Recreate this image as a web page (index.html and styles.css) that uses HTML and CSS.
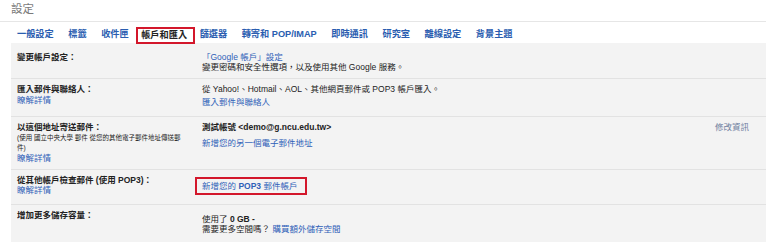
FILE: index.html
```html
<!DOCTYPE html>
<html lang="zh-Hant">
<head>
<meta charset="utf-8">
<title>設定</title>
<link rel="stylesheet" href="styles.css">
</head>
<body>
<div class="title">設定</div>
<nav class="tabs">
  <a class="tab">一般設定</a>
  <a class="tab">標籤</a>
  <a class="tab">收件匣</a>
  <span class="tab active">帳戶和匯入</span>
  <a class="tab">篩選器</a>
  <a class="tab">轉寄和 POP/IMAP</a>
  <a class="tab">即時通訊</a>
  <a class="tab">研究室</a>
  <a class="tab">離線設定</a>
  <a class="tab">背景主題</a>
</nav>
<div class="panel">
  <div class="row r1">
    <div class="label"><div class="lt">變更帳戶設定：</div></div>
    <div class="value">
      <div><a class="lnk">「Google 帳戶」設定</a></div>
      <div>變更密碼和安全性選項，以及使用其他 Google 服務。</div>
    </div>
    <div class="action"></div>
  </div>
  <div class="row r2">
    <div class="label">
      <div class="lt">匯入郵件與聯絡人：</div>
      <div class="learn"><a class="lnk">瞭解詳情</a></div>
    </div>
    <div class="value">
      <div>從 Yahoo!、Hotmail、AOL、其他網頁郵件或 POP3 帳戶匯入。</div>
      <div class="import"><a class="lnk">匯入郵件與聯絡人</a></div>
    </div>
    <div class="action"></div>
  </div>
  <div class="row r3">
    <div class="label">
      <div class="lt">以這個地址寄送郵件：</div>
      <div class="note">(使用 國立中央大學 郵件 從您的其他電子郵件地址傳送郵件)</div>
      <div><a class="lnk">瞭解詳情</a></div>
    </div>
    <div class="value">
      <div class="b">測試帳號 &lt;demo@g.ncu.edu.tw&gt;</div>
      <div class="addr"><a class="lnk">新增您的另一個電子郵件地址</a></div>
    </div>
    <div class="action"><a class="edit">修改資訊</a></div>
  </div>
  <div class="row r4">
    <div class="label">
      <div class="lt">從其他帳戶檢查郵件 (使用 POP3)：</div>
      <div><a class="lnk">瞭解詳情</a></div>
    </div>
    <div class="value">
      <a class="lnk boxed">新增您的 <b>POP3</b> 郵件帳戶</a>
    </div>
    <div class="action"></div>
  </div>
  <div class="row r5">
    <div class="label"><div class="lt">增加更多儲存容量：</div></div>
    <div class="value storage">
      <div>使用了 <b>0 GB -</b></div>
      <div>需要更多空間嗎？ <a class="lnk">購買額外儲存空間</a></div>
    </div>
    <div class="action"></div>
  </div>
</div>
</body>
</html>
```
FILE: styles.css
```css
html, body {
  margin: 0;
  padding: 0;
  background: #ffffff;
}
body {
  font-family: "Liberation Sans", "Noto Sans CJK TC", sans-serif;
  font-size: 8.5px;
  color: #222222;
  width: 766px;
  height: 242px;
  overflow: hidden;
}
.title {
  height: 22px;
  box-sizing: border-box;
  border-bottom: 1px solid #e6e6e6;
  padding-left: 11px;
  font-size: 11.5px;
  line-height: 19px;
  color: #7a7a7a;
}
.tabs {
  display: flex;
  align-items: flex-end;
  height: 21px;
  padding-left: 15px;
  gap: 10.5px;
  font-size: 9.2px;
  font-weight: bold;
  line-height: 13px;
}
.tab {
  color: #2a5db0;
  border: 2px solid transparent;
  white-space: nowrap;
}
.tab.active {
  color: #222222;
  border-color: #d3172b;
  padding: 0 6px 0 3px;
  margin: 0 -8px -1px -5px;
}
.panel {
  margin-left: 11px;
  background: #f3f3f3;
  padding-top: 4px;
  height: 199px;
  box-sizing: border-box;
}
.row {
  display: grid;
  grid-template-columns: 185px 1fr auto;
  padding: 5px 17px 6px 6px;
  border-bottom: 1px solid #e2e2e2;
  line-height: 10px;
}
.row.r5 {
  border-bottom: none;
}
.lt {
  font-weight: bold;
}
.lnk {
  color: #2f61b8;
}
.learn {
  margin-top: 1px;
}
.import {
  margin-top: 3px;
  margin-bottom: 3px;
}
.note {
  font-size: 6.5px;
  line-height: 10px;
  max-width: 167px;
  margin-top: 1px;
}
.b {
  font-weight: bold;
}
.addr {
  margin-top: 6px;
}
.edit {
  color: #6f7f9f;
}
.r4 {
  padding-bottom: 9px;
}
.boxed {
  display: inline-block;
  margin: 2px 0 0 -7px;
  padding: 2px 8px 2px 5px;
  border: 2px solid #d3172b;
}
.storage {
  padding-top: 4px;
}
```
